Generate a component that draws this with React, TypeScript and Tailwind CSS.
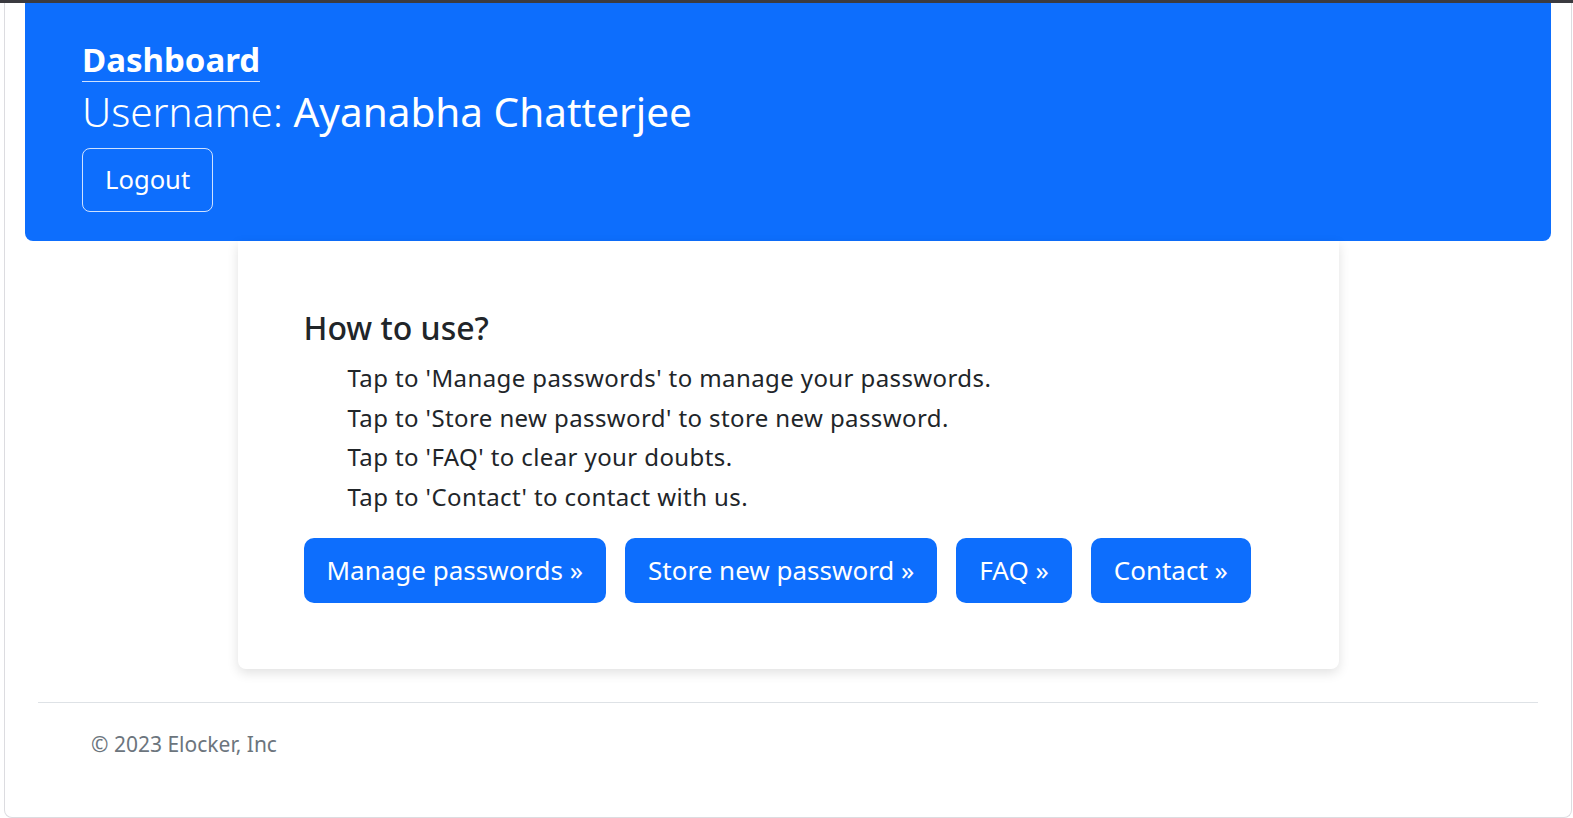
import React from 'react';

const steps = [
  "Tap to 'Manage passwords' to manage your passwords.",
  "Tap to 'Store new password' to store new password.",
  "Tap to 'FAQ' to clear your doubts.",
  "Tap to 'Contact' to contact with us.",
];

const actions = ['Manage passwords »', 'Store new password »', 'FAQ »', 'Contact »'];

const App: React.FC = () => {
  return (
    <div className="min-h-[818px] bg-white font-['Noto_Sans',sans-serif]">
      <div className="h-[3px] bg-[#3b3b40]" />
      <div className="ml-[4px] mr-[1px] h-[815px] rounded-b-lg border-x border-b border-[#dcdce0]">
        {/* Header */}
        <header className="mx-[20px] rounded-b-lg bg-[#0d6efd] px-[57px] pt-[36px] pb-[29px] text-white">
          <a href="#" className="inline-block border-b border-white/80 text-[33px] leading-[42px] font-bold">
            Dashboard
          </a>
          <div className="mt-[2px] text-[40.5px] leading-[56px]">
            <span className="font-light">Username: </span>
            <span>Ayanabha Chatterjee</span>
          </div>
          <button className="mt-[8px] h-[64px] rounded-lg border border-white/80 px-[22px] text-[25.6px] leading-[38px]">
            Logout
          </button>
        </header>

        {/* Card */}
        <main className="mx-auto w-[1101px] rounded-b-lg bg-white px-[66px] pt-[67px] pb-[66px] shadow-[0_4px_12px_rgba(0,0,0,0.12)] text-[#212529]">
          <h2 className="text-[32px] leading-[40px] font-medium">How to use?</h2>
          <ul className="mt-[10px] pl-[44px] text-[24px] leading-[39.5px] tracking-[0.4px]">
            {steps.map((s) => (
              <li key={s}>{s}</li>
            ))}
          </ul>
          <div className="mt-[22px] flex gap-[19px]">
            {actions.map((a) => (
              <button
                key={a}
                className="h-[65px] rounded-[10px] bg-[#0d6efd] px-[23px] text-[26px] text-white"
              >
                {a}
              </button>
            ))}
          </div>
        </main>

        {/* Footer */}
        <footer className="mx-[33px] mt-[33px] border-t border-[#dee2e6] px-[53px] pt-[26px] text-[21px] text-[#6c757d]">
          © 2023 Elocker, Inc
        </footer>
      </div>
    </div>
  );
};

export default App;
